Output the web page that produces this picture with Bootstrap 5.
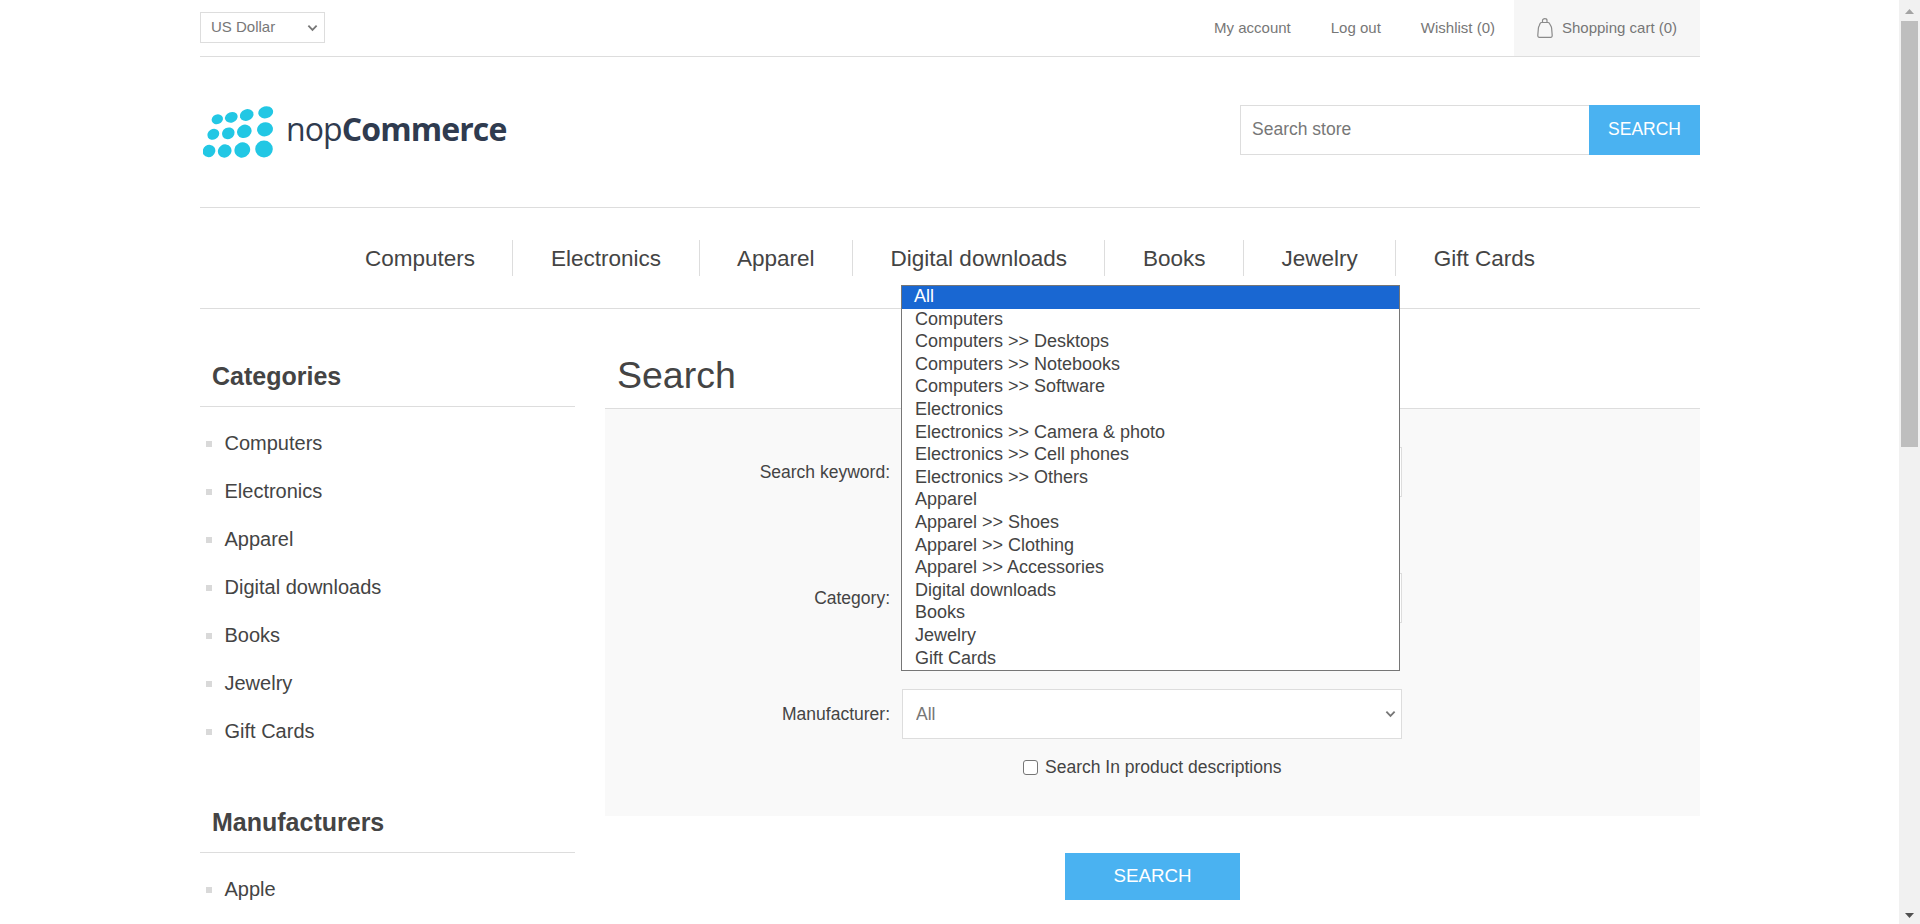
<!DOCTYPE html>
<html>
  <head>
    <meta charset="UTF-8">
    <title>Search</title>
    <link href="https://cdn.jsdelivr.net/npm/bootstrap@5.3.0/dist/css/bootstrap.min.css" rel="stylesheet">
    <style>
      html, body { height: 100%; overflow: hidden; }
      body { font-family: "Liberation Sans", Arial, sans-serif; color: #444; background: #fff; }
      a { color: inherit; text-decoration: none; }
      .store-page { width: 1899px; height: 924px; overflow: hidden; flex: none; }
      .store-wrap { width: 1500px; margin-left: 200px; }

      .fake-scroll { width: 21px; height: 924px; background: #f1f1f1; flex: none; display: flex; flex-direction: column; align-items: center; }
      .scroll-arrow { flex: none; }
      .scroll-thumb { width: 17px; height: 426px; background: #bebebe; flex: none; }
      .scroll-arrow.down { margin-top: auto; }

      .top-bar { height: 57px; border-bottom: 1px solid #ddd; font-size: 15px; color: #777; }
      .form-select.currency { width: 125px; height: 31px; margin-top: 12px; font-size: 15px; color: #777; padding: 0 0 0 10px; border: 1px solid #ddd; border-radius: 0; background-position: right 6px center; }
      .form-select.currency, .field-row .form-select {
        background-image: url("data:image/svg+xml,%3csvg xmlns='http://www.w3.org/2000/svg' viewBox='0 0 12 8'%3e%3cpath fill='none' stroke='%23777' stroke-width='2' d='M1.5 1.5L6 6l4.5-4.5'/%3e%3c/svg%3e");
        background-size: 11px 8px;
      }
      .top-links a { margin-left: 40px; }
      .top-links .cart-link { height: 56px; width: 186px; background: #f6f6f6; margin-left: 19px; padding-left: 23px; gap: 9px; }

      .logo-row { height: 150px; }
      .logo-box { gap: 12px; padding-left: 3px; }
      .logo-text { font-family: "Open Sans", "Liberation Sans", sans-serif; font-size: 32px; color: #2f3b4f; letter-spacing: -0.9px; line-height: 1; padding-bottom: 6px; }
      .logo-text b { font-weight: 700; }
      .store-search { width: 460px; height: 50px; margin-bottom: 4px; }
      .store-search input { flex: 1; min-width: 0; height: 50px; border: 1px solid #ddd; border-right: 0; padding: 0 11px 2px; font-size: 17.5px; color: #777; outline: 0; }
      .store-search input::placeholder { color: #777; }
      .blue-btn { background: #4ab2f1; color: #fff; border: 0; border-radius: 0; padding: 0; }
      .blue-btn:hover { background: #4ab2f1; color: #fff; }
      .store-search .blue-btn { width: 111px; font-size: 17.5px; padding-bottom: 2px; }

      .main-menu { height: 102px; border-top: 1px solid #ddd; border-bottom: 1px solid #ddd; font-size: 22.5px; list-style: none; }
      .main-menu li { padding: 0 37.5px; height: 36px; line-height: 38px; border-right: 1px solid #ddd; }
      .main-menu li:last-child { border-right: 0; }

      .side-col { width: 375px; flex: none; }
      .side-title { font-size: 25px; font-weight: 700; height: 98px; padding: 0 12px 11px; border-bottom: 1px solid #ddd; display: flex; align-items: flex-end; color: #444; }
      .side-list { list-style: none; padding: 12px 0 0; margin: 0 0 42px; font-size: 20px; }
      .side-list li { height: 48px; line-height: 48px; padding-left: 24.5px; position: relative; }
      .side-list li::before { content: ""; position: absolute; left: 6px; top: 22px; width: 6px; height: 6px; background: #d9d9d9; }
      .side-title.second { height: 56px; }

      .main-col { margin-left: 30px; flex: 1; }
      .page-head { height: 100px; border-bottom: 1px solid #ddd; display: flex; align-items: flex-end; padding: 0 12px 10px; }
      .page-head h1 { font-size: 37.5px; font-weight: 400; margin: 0; line-height: 1.2; color: #444; }
      .search-panel { background: #f9f9f9; height: 407px; padding-top: 38px; position: relative; }
      .field-row { height: 50px; font-size: 17.5px; margin-bottom: 0; }
      .field-row label { width: 285px; text-align: right; margin: 0 12px 0 0; }
      .field-row .form-control, .field-row .form-select { width: 500px; height: 50px; border: 1px solid #ddd; border-radius: 0; font-size: 17.5px; color: #777; padding: 0 13px; box-shadow: none; background-color: #fff; }
      .field-row .form-select { background-position: right 5px center; }
      .row-category { margin-top: 76px; }
      .row-maker { margin-top: 66px; }
      .desc-check { margin: 15px 0 0 418px; font-size: 17.5px; gap: 7px; }
      .desc-check .form-check-input { width: 15px; height: 15px; margin: 0; border: 1px solid #767676; border-radius: 3px; background-color: #fff; }

      .select-popup { position: absolute; left: 296px; top: -124px; width: 499px; background: #fff; border: 1px solid #767676; font-size: 18px; color: #444; z-index: 10; }
      .select-popup div { height: 22.6px; line-height: 21px; padding-left: 13px; white-space: nowrap; }
      .select-popup .picked { background: #1967d2; color: #fff; padding-left: 12px; }

      .submit-row { padding-top: 37px; }
      .submit-row .blue-btn { width: 175px; height: 47px; font-size: 18.75px; }
    </style>
  </head>
  <body class="d-flex">
    <div class="store-page">
      <div class="store-wrap">
        <div class="top-bar d-flex align-items-start justify-content-between">
          <select class="form-select currency">
            <option>US Dollar</option>
          </select>
          <div class="top-links d-flex align-items-center">
            <a href="#">My account</a>
            <a href="#">Log out</a>
            <a href="#">Wishlist (0)</a>
            <a href="#" class="cart-link d-flex align-items-center">
              <svg width="16" height="20" viewBox="0 0 16 20" fill="none" stroke="#8a8a8a" stroke-width="1.2">
                <path d="M5.5 4.5V2.5C5.5 1.3 6.5 .7 7.8 .7S10 1.3 10 2.5V4.5"/>
                <path d="M4.6 4.5H11C11.8 4.5 12.2 4.9 12.5 5.6L13.9 8C14.3 8.7 14.5 9.3 14.6 10L15.2 17.3C15.3 18.6 14.6 19.3 13.6 19.3H2.4C1.4 19.3 .7 18.6 .8 17.3L1.4 10C1.5 9.3 1.7 8.7 2.1 8L3.1 5.6C3.4 4.9 3.8 4.5 4.6 4.5Z"/>
              </svg>
              <span>Shopping cart (0)</span>
            </a>
          </div>
        </div>

        <div class="logo-row d-flex align-items-center justify-content-between">
          <a href="#" class="logo-box d-flex align-items-center">
            <svg width="71" height="54" viewBox="203 105 71 54" fill="#22c7e4">
              <ellipse cx="217.3" cy="119.3" rx="5.8" ry="4.8" transform="rotate(-20 217.3 119.3)"/>
              <ellipse cx="231.3" cy="117.3" rx="6.5" ry="5.2" transform="rotate(-20 231.3 117.3)"/>
              <ellipse cx="246.7" cy="115" rx="7" ry="5.7" transform="rotate(-20 246.7 115)"/>
              <ellipse cx="265.7" cy="112.3" rx="7.5" ry="6" transform="rotate(-15 265.7 112.3)"/>
              <ellipse cx="213.3" cy="134.3" rx="6.2" ry="5.2" transform="rotate(-30 213.3 134.3)"/>
              <ellipse cx="228.3" cy="133.3" rx="6.5" ry="5.7" transform="rotate(-30 228.3 133.3)"/>
              <ellipse cx="244.3" cy="131.3" rx="7.5" ry="6.5" transform="rotate(-25 244.3 131.3)"/>
              <ellipse cx="265" cy="129.3" rx="8" ry="7" transform="rotate(-15 265 129.3)"/>
              <ellipse cx="209" cy="151" rx="6.5" ry="6" transform="rotate(-35 209 151)"/>
              <ellipse cx="224.7" cy="151" rx="7" ry="6.5" transform="rotate(-35 224.7 151)"/>
              <ellipse cx="242.3" cy="150" rx="8" ry="7.5" transform="rotate(-30 242.3 150)"/>
              <ellipse cx="264" cy="149" rx="8.8" ry="8.5"/>
            </svg>
            <span class="logo-text">nop<b>Commerce</b></span>
          </a>
          <form class="store-search d-flex" onsubmit="return false">
            <input type="text" placeholder="Search store">
            <button class="btn blue-btn">SEARCH</button>
          </form>
        </div>

        <ul class="main-menu d-flex align-items-center justify-content-center m-0 p-0">
          <li><a href="#">Computers</a></li>
          <li><a href="#">Electronics</a></li>
          <li><a href="#">Apparel</a></li>
          <li><a href="#">Digital downloads</a></li>
          <li><a href="#">Books</a></li>
          <li><a href="#">Jewelry</a></li>
          <li><a href="#">Gift Cards</a></li>
        </ul>

        <div class="d-flex">
          <aside class="side-col">
            <div class="side-title">Categories</div>
            <ul class="side-list">
              <li><a href="#">Computers</a></li>
              <li><a href="#">Electronics</a></li>
              <li><a href="#">Apparel</a></li>
              <li><a href="#">Digital downloads</a></li>
              <li><a href="#">Books</a></li>
              <li><a href="#">Jewelry</a></li>
              <li><a href="#">Gift Cards</a></li>
            </ul>
            <div class="side-title second">Manufacturers</div>
            <ul class="side-list">
              <li><a href="#">Apple</a></li>
            </ul>
          </aside>

          <main class="main-col">
            <div class="page-head"><h1>Search</h1></div>
            <div class="search-panel">
              <div class="field-row d-flex align-items-center">
                <label>Search keyword:</label>
                <input type="text" class="form-control">
              </div>
              <div class="field-row row-category d-flex align-items-center">
                <label>Category:</label>
                <select class="form-select"><option>All</option></select>
              </div>
              <div class="field-row row-maker d-flex align-items-center">
                <label>Manufacturer:</label>
                <select class="form-select"><option>All</option></select>
              </div>
              <div class="desc-check d-flex align-items-center">
                <input type="checkbox" class="form-check-input" id="descCheck">
                <label for="descCheck">Search In product descriptions</label>
              </div>

              <div class="select-popup">
                <div class="picked">All</div>
                <div>Computers</div>
                <div>Computers &gt;&gt; Desktops</div>
                <div>Computers &gt;&gt; Notebooks</div>
                <div>Computers &gt;&gt; Software</div>
                <div>Electronics</div>
                <div>Electronics &gt;&gt; Camera &amp; photo</div>
                <div>Electronics &gt;&gt; Cell phones</div>
                <div>Electronics &gt;&gt; Others</div>
                <div>Apparel</div>
                <div>Apparel &gt;&gt; Shoes</div>
                <div>Apparel &gt;&gt; Clothing</div>
                <div>Apparel &gt;&gt; Accessories</div>
                <div>Digital downloads</div>
                <div>Books</div>
                <div>Jewelry</div>
                <div>Gift Cards</div>
              </div>
            </div>
            <div class="submit-row text-center">
              <button class="btn blue-btn">SEARCH</button>
            </div>
          </main>
        </div>
      </div>
    </div>
    <div class="fake-scroll">
      <svg class="scroll-arrow" width="21" height="21" viewBox="0 0 21 21" fill="#a3a3a3"><path d="M10.5 9L15 14H6Z"/></svg>
      <div class="scroll-thumb"></div>
      <svg class="scroll-arrow down" width="21" height="21" viewBox="0 0 21 21" fill="#505050"><path d="M10.5 15L15 10H6Z"/></svg>
    </div>
    <script src="https://cdn.jsdelivr.net/npm/bootstrap@5.3.0/dist/js/bootstrap.bundle.min.js"></script>
  </body>
</html>
